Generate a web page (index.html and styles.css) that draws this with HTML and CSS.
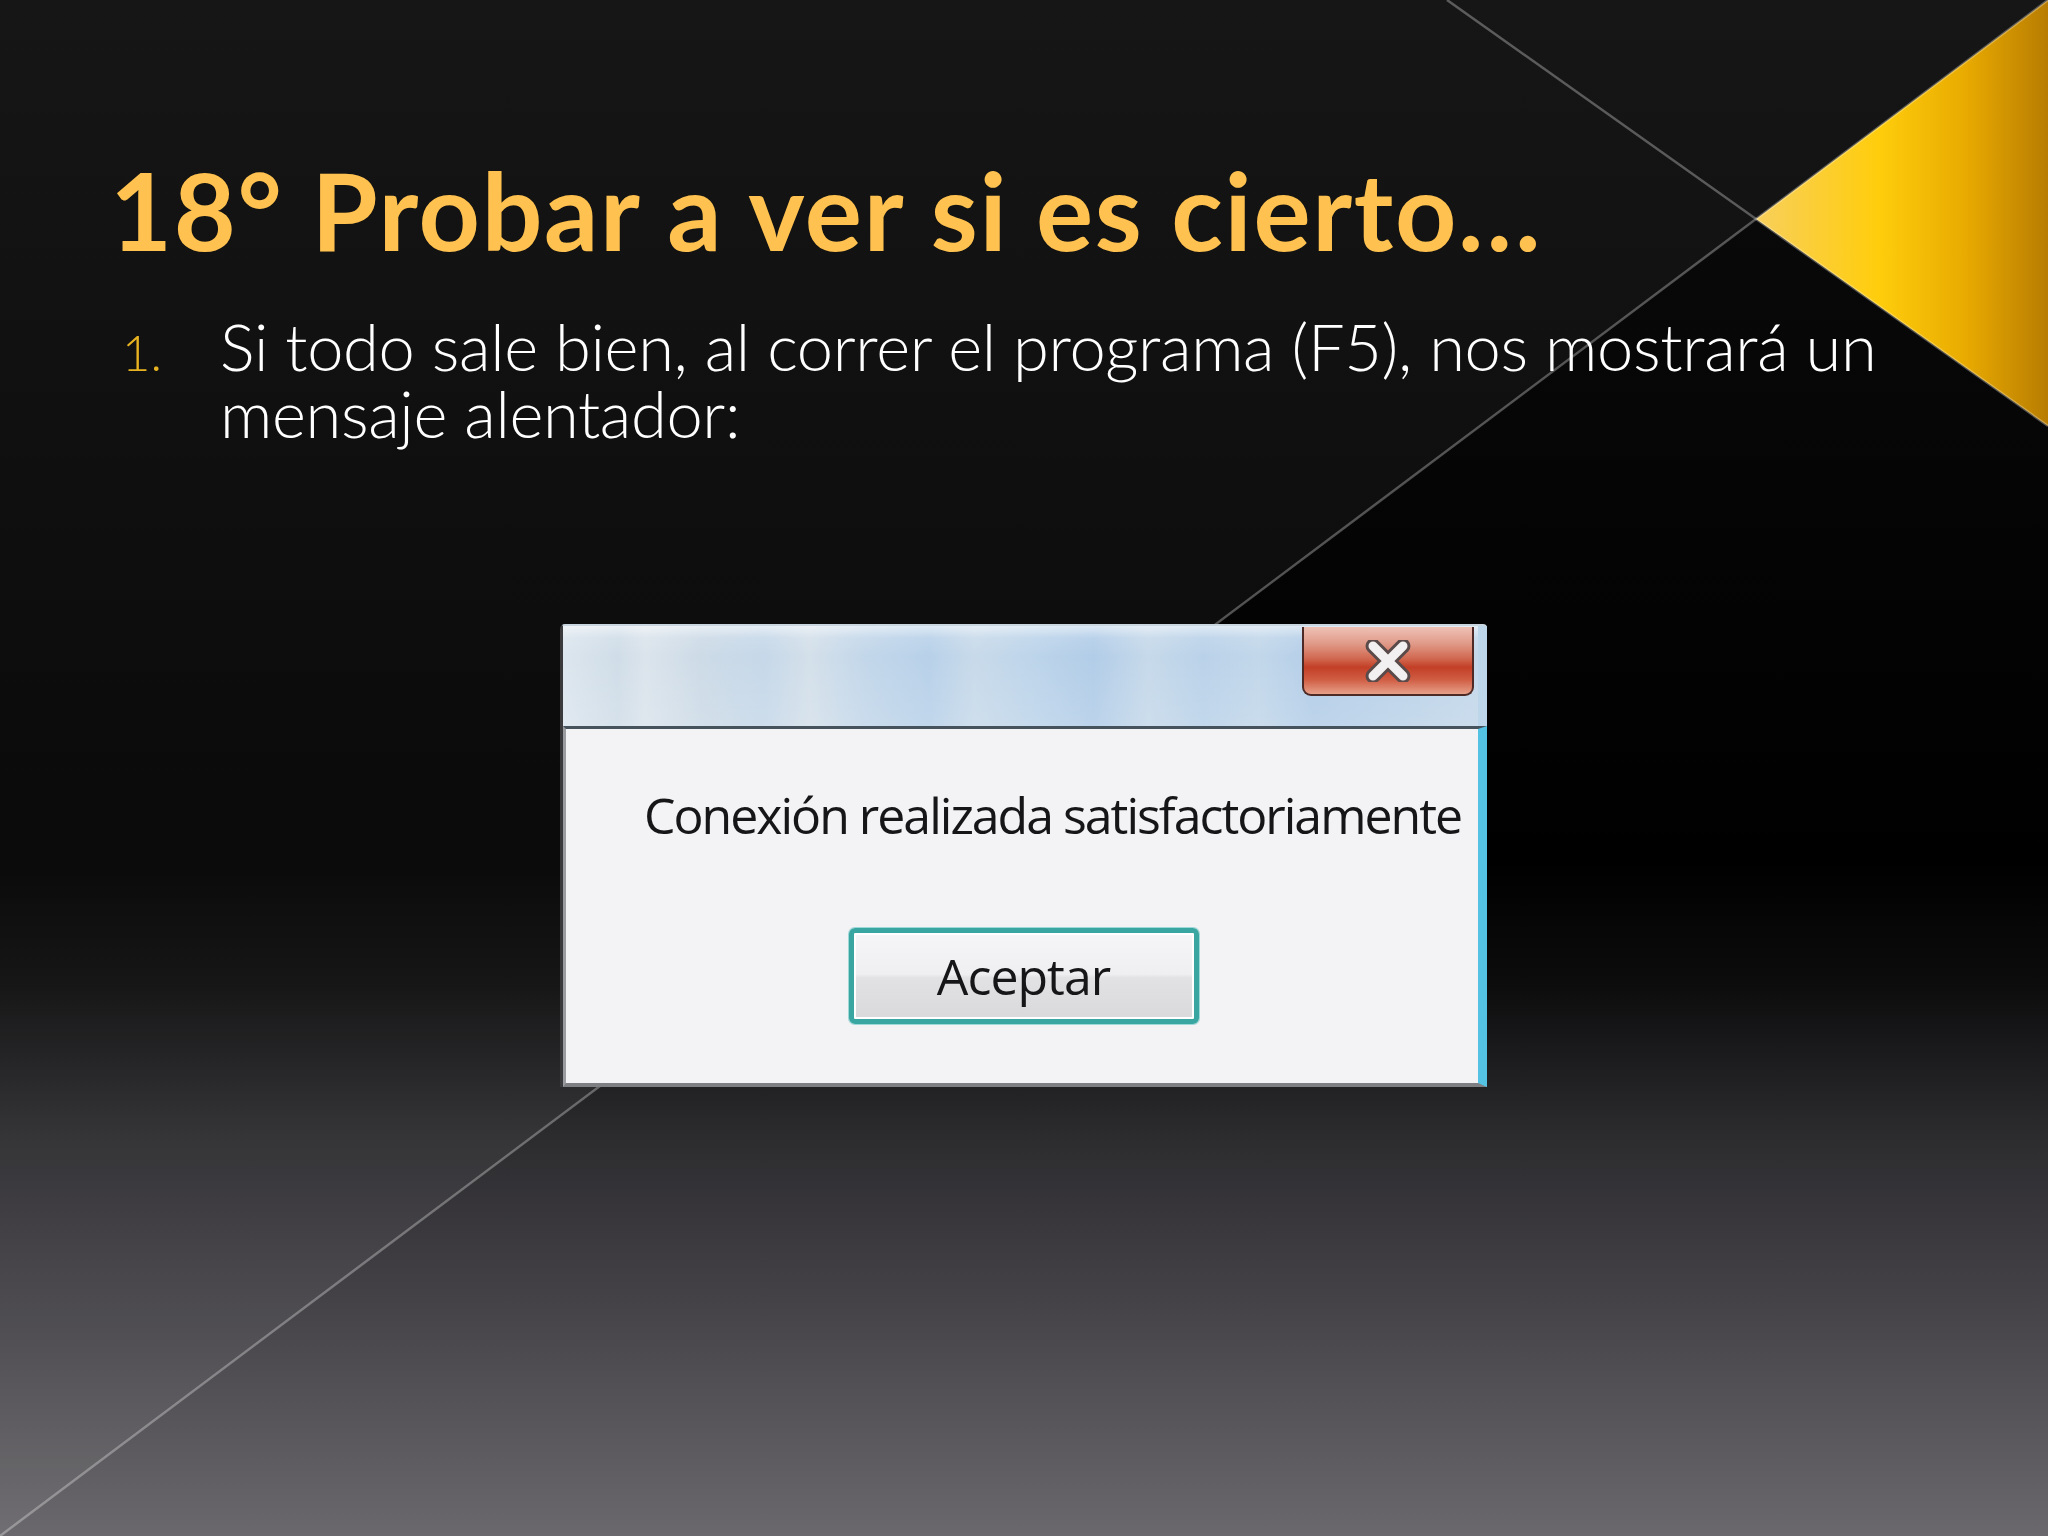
FILE: index.html
```html
<!DOCTYPE html>
<html lang="es">
<head>
<meta charset="utf-8">
<title>18° Probar a ver si es cierto…</title>
<link rel="stylesheet" href="styles.css">
</head>
<body>
<div class="slide">
  <svg class="deco" width="2048" height="1536" viewBox="0 0 2048 1536" aria-hidden="true">
    <defs>
      <linearGradient id="gold" x1="1756" y1="0" x2="2048" y2="0" gradientUnits="userSpaceOnUse">
        <stop offset="0" stop-color="#f8cf5c"/>
        <stop offset="0.42" stop-color="#ffcd0c"/>
        <stop offset="0.72" stop-color="#e8aa00"/>
        <stop offset="1" stop-color="#b87c02"/>
      </linearGradient>
    </defs>
    <polygon points="0,0 2048,0 0,1536" fill="#ffffff" fill-opacity="0.045"/>
    <polygon points="1756,219 2048,0 2048,426" fill="url(#gold)"/>
    <line x1="0" y1="1536" x2="2048" y2="0" stroke="#ffffff" stroke-opacity="0.3" stroke-width="2.5"/>
    <line x1="1447" y1="0" x2="2048" y2="426" stroke="#ffffff" stroke-opacity="0.3" stroke-width="2.5"/>
  </svg>

  <div class="content">
    <h1 class="title">18° Probar a ver si es cierto…</h1>
    <ol class="list">
      <li class="item"><span class="num">1.</span><span class="txt">Si todo sale bien, al correr el programa (F5), nos mostrará un mensaje alentador:</span></li>
    </ol>

    <div class="dialog">
      <div class="titlebar">
        <div class="close">
          <svg width="46" height="42" viewBox="0 0 46 42" aria-hidden="true">
            <path d="M8 6 L38 36 M38 6 L8 36" stroke="#5a4a4a" stroke-width="15" stroke-linecap="round"/>
            <path d="M8 6 L38 36 M38 6 L8 36" stroke="#f2f0f0" stroke-width="9" stroke-linecap="round"/>
          </svg>
        </div>
      </div>
      <div class="dbody">
        <p class="msg">Conexión realizada satisfactoriamente</p>
        <div class="btnrow"><div class="btn">Aceptar</div></div>
      </div>
    </div>
  </div>
</div>
</body>
</html>
```

FILE: styles.css
```css
html, body {
  margin: 0;
  padding: 0;
  background: #000;
}

.slide {
  position: relative;
  width: 2048px;
  height: 1536px;
  overflow: hidden;
  background: linear-gradient(to bottom, #0c0c0c 0%, #040404 36%, #000000 56%, #0c0c0d 64%, #2c2b2e 74%, #444247 84.6%, #6a686c 100%);
}

.deco {
  position: absolute;
  left: 0;
  top: 0;
}

.content {
  position: relative;
  padding-top: 150px;
}

.title {
  margin: 0 0 0 110px;
  font-family: Lato, "DejaVu Sans", sans-serif;
  font-weight: 700;
  font-size: 107px;
  line-height: 120px;
  color: #ffc14f;
  letter-spacing: 1.7px;
  white-space: nowrap;
}

.list {
  list-style: none;
  margin: 43px 0 0 0;
  padding: 0;
}

.item {
  display: flex;
  align-items: baseline;
}

.num {
  width: 98px;
  padding-left: 122px;
  font-family: Lato, "DejaVu Sans", sans-serif;
  font-weight: 300;
  font-size: 49px;
  color: #e8b320;
  flex: none;
}

.txt {
  width: 1700px;
  font-family: Lato, "DejaVu Sans", sans-serif;
  font-weight: 300;
  font-size: 65px;
  line-height: 67px;
  color: #ffffff;
  letter-spacing: -0.35px;
}

.dialog {
  margin: 177px 0 0 560px;
  width: 927px;
  height: 463px;
  display: flex;
  flex-direction: column;
  box-sizing: border-box;
  border-left: 3px solid #3a3a3d;
  border-top: 2px solid #c9d6e0;
  border-radius: 5px 4px 0 0;
  background: #c6d8e8;
}

.titlebar {
  height: 100px;
  flex: none;
  display: flex;
  justify-content: flex-end;
  align-items: flex-start;
  padding-right: 4px;
  box-sizing: border-box;
  border-right: 9px solid #bdd6ea;
  background:
    linear-gradient(to bottom, rgba(255,255,255,0.55) 0, rgba(255,255,255,0.1) 12%, rgba(255,255,255,0) 30%, rgba(255,255,255,0.12) 100%),
    linear-gradient(90deg, #dce6ee 0%, #d0dde8 6%, #dbe4ec 9%, #cddbe7 15%, #c6d8e9 22%, #d4e0ea 27%, #c3d7ea 33%, #b8d1e9 40%, #c8daea 45%, #bcd4ea 52%, #b2cde8 58%, #c6d9ea 64%, #bad2e9 70%, #c2d7ea 76%, #b4cee8 82%, #c4d8ea 100%);
}

.close {
  width: 172px;
  height: 69px;
  margin-top: 1px;
  box-sizing: border-box;
  border: 2px solid #4e2a26;
  border-top: none;
  border-radius: 0 0 9px 9px;
  display: flex;
  align-items: center;
  justify-content: center;
  background: linear-gradient(to bottom, #eec1b6 0%, #e09a88 25%, #d0664e 48%, #c23f26 60%, #cf5c42 78%, #e7a089 100%);
}

.dbody {
  flex: 1;
  box-sizing: border-box;
  border-top: 3px solid #46525c;
  border-left: 3px solid #9a9ca0;
  border-right: 9px solid #54c2e2;
  border-bottom: 4px solid #7e7f83;
  background: #f3f2f4;
  padding: 1px 0 0 78px;
}

.msg {
  margin: 0;
  padding-top: 52px;
  font-family: "Open Sans", "Noto Sans", sans-serif;
  font-size: 50px;
  line-height: 66px;
  color: #161618;
  letter-spacing: -2px;
  white-space: nowrap;
}

.btnrow {
  display: flex;
  margin: 80px 0 0 -78px;
  justify-content: center;
}

.btn {
  width: 350px;
  height: 96px;
  margin-left: 3px;
  box-sizing: border-box;
  border: 5px solid #3aa6a2;
  border-radius: 6px;
  box-shadow: 0 0 0 1px #9fd8d8, inset 0 0 0 2px #ffffff;
  background: linear-gradient(to bottom, #f6f6f8 0%, #efeff1 48%, #e2e2e4 52%, #d9d9db 100%);
  display: flex;
  align-items: center;
  justify-content: center;
  font-family: "Open Sans", "Noto Sans", sans-serif;
  font-size: 50px;
  letter-spacing: -1px;
  color: #161618;
}
```
